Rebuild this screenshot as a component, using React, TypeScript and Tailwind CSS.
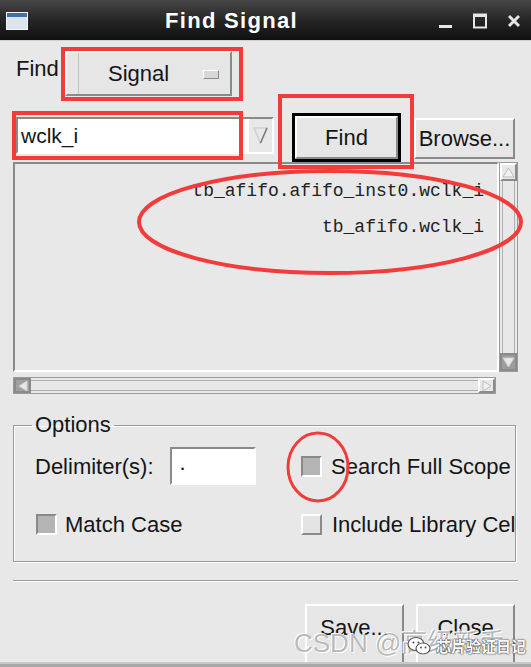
import React from "react";

const raised =
  "border-2 border-t-white border-l-white border-r-[#8a8a8a] border-b-[#8a8a8a]";
const sunken =
  "border-2 border-t-[#8a8a8a] border-l-[#8a8a8a] border-r-white border-b-white";

function WinIcon() {
  return (
    <svg width="22" height="18" viewBox="0 0 22 18">
      <rect x="0.5" y="0.5" width="21" height="17" fill="#dde4ec" stroke="#f4f4f4" />
      <rect x="1" y="1" width="20" height="4" fill="#3f6fae" />
    </svg>
  );
}

function Controls() {
  return (
    <div className="flex items-center gap-[21px] mr-[11px] mt-[2px]">
      <svg width="13" height="16" viewBox="0 0 13 16">
        <rect x="0" y="12" width="13" height="3" fill="#e6e6e6" />
      </svg>
      <svg width="14" height="16" viewBox="0 0 14 16">
        <rect x="1" y="1.5" width="12" height="13" fill="none" stroke="#e6e6e6" strokeWidth="2" />
        <rect x="1" y="1" width="12" height="3" fill="#e6e6e6" />
      </svg>
      <svg width="12" height="16" viewBox="0 0 12 16">
        <path d="M1 3 L11 13 M11 3 L1 13" stroke="#e6e6e6" strokeWidth="3" />
      </svg>
    </div>
  );
}

function Checkbox({ checked }: { checked: boolean }) {
  return checked ? (
    <div className="w-[21px] h-[21px] shrink-0 border-2 border-t-[#8a8a8a] border-l-[#8a8a8a] border-r-white border-b-white bg-[#b4b4b4]" />
  ) : (
    <div className="w-[21px] h-[21px] shrink-0 border-2 border-t-white border-l-white border-r-[#8a8a8a] border-b-[#8a8a8a] bg-[#e4e4e4]" />
  );
}

function VScroll() {
  return (
    <div className="w-[19px] h-[210px] shrink-0 flex flex-col border border-[#9a9a9a] bg-[#e8e8e8]">
      <div className={`h-[18px] ${raised} flex items-center justify-center`}>
        <svg width="13" height="11" viewBox="0 0 13 11">
          <path d="M6.5 1 L12 10 L1 10 Z" fill="#f2f2f2" stroke="#bdbdbd" />
        </svg>
      </div>
      <div className="flex-1 border-x border-[#b0b0b0] mx-[2px]" />
      <div className="h-[18px] border-2 border-[#8a8a8a] bg-[#9c9c9c] flex items-center justify-center">
        <svg width="13" height="11" viewBox="0 0 13 11">
          <path d="M1 1 L12 1 L6.5 10 Z" fill="#e8e8e8" stroke="#cfcfcf" />
        </svg>
      </div>
    </div>
  );
}

function HScroll() {
  return (
    <div className="ml-[13px] mt-[5px] w-[483px] h-[17px] shrink-0 flex border border-[#9a9a9a] bg-[#e8e8e8]">
      <div className="w-[17px] border-2 border-[#8a8a8a] bg-[#a0a0a0] flex items-center justify-center">
        <svg width="10" height="12" viewBox="0 0 10 12">
          <path d="M9 1 L9 11 L1 6 Z" fill="#e8e8e8" stroke="#cfcfcf" />
        </svg>
      </div>
      <div className="flex-1 border-y border-[#b0b0b0] my-[2px]" />
      <div className={`w-[17px] ${raised} flex items-center justify-center`}>
        <svg width="10" height="12" viewBox="0 0 10 12">
          <path d="M1 1 L1 11 L9 6 Z" fill="#f2f2f2" stroke="#bdbdbd" />
        </svg>
      </div>
    </div>
  );
}

export default function App() {
  return (
    <div className="relative w-[531px] h-[667px] overflow-hidden bg-[#e8e8e8] font-['Liberation_Sans',Arial,sans-serif] text-[#151515] flex flex-col">
      {/* Title bar */}
      <div className="h-[41px] shrink-0 flex items-center bg-linear-to-b from-[#474747] via-[#262626] to-[#101010] border-b border-[#cfcfcf]">
        <div className="ml-[6px] mt-[2px] flex">
          <WinIcon />
        </div>
        <div className="flex-1 text-center text-white font-bold text-[22px] tracking-[1.3px] mr-[4px]">
          Find Signal
        </div>
        <Controls />
      </div>

      {/* Row 1 */}
      <div className="mt-[10px] h-[45px] shrink-0 flex items-center">
        <span className="ml-[16px] w-[49px] text-[22px] leading-[22px] -mt-[10px]">Find</span>
        <div className={`w-[167px] h-[45px] ${raised} bg-[#e6e6e6] flex items-center`}>
          <div className="w-[12px] h-full border-r border-[#c4c4c4]" />
          <span className="ml-[29px] text-[22px] leading-[22px] mt-[1px]">Signal</span>
          <div className={`ml-[34px] w-[16px] h-[9px] ${raised} border-[1.5px] bg-[#d8d8d8] mt-[2px]`} />
        </div>
      </div>

      {/* Row 2 */}
      <div className="mt-[17px] h-[49px] shrink-0 flex items-start">
        <div className={`ml-[16px] mt-[4px] w-[258px] h-[37px] ${sunken} flex`}>
          <div className="flex-1 bg-white flex items-center pl-[3px] text-[21px]">wclk_i</div>
          <div className="w-[23px] bg-[#e8e8e8] flex items-center justify-center">
            <svg width="15" height="17" viewBox="0 0 15 17">
              <path d="M1 1 L14 1 L7.5 16 Z" fill="none" stroke="#d0d0d0" strokeWidth="1.5" />
              <path d="M14 1 L7.5 16" stroke="#7a7a7a" strokeWidth="1.5" />
            </svg>
          </div>
        </div>
        <div className="ml-[18px] w-[109px] h-[49px] border-[3px] border-black">
          <div className={`w-full h-full ${raised} bg-[#e6e6e6] flex items-center justify-center text-[22px]`}>
            Find
          </div>
        </div>
        <div className={`ml-[13px] mt-[5px] w-[101px] h-[41px] ${raised} bg-[#e6e6e6] flex items-center justify-center text-[22px]`}>
          Browse...
        </div>
      </div>

      {/* List */}
      <div className="flex shrink-0">
        <div className={`ml-[13px] w-[486px] h-[210px] ${sunken} bg-[#e8e8e8] pt-[9px] pr-[13px] font-['Liberation_Mono',monospace] text-[18px] leading-[36px] text-right text-[#222]`}>
          <div>tb_afifo.afifo_inst0.wclk_i</div>
          <div>tb_afifo.wclk_i</div>
        </div>
        <VScroll />
      </div>
      <HScroll />

      {/* Options */}
      <fieldset className="mt-[20px] ml-[13px] w-[503px] shrink-0 border border-[#9a9a9a] shadow-[inset_1px_1px_0_#fff,1px_1px_0_#fff] pl-[21px] pt-[11px] pb-[18px] whitespace-nowrap">
        <legend className="-ml-[3px] px-[3px] text-[22px] leading-[22px]">Options</legend>
        <div className="grid grid-cols-[266px_1fr] gap-y-[20px] text-[22px] overflow-hidden">
          <div className="flex items-center h-[38px]">
            <span>Delimiter(s):</span>
            <div className={`ml-[16px] w-[86px] h-[38px] ${sunken} bg-white pl-[8px] leading-[28px]`}>.</div>
          </div>
          <div className="flex items-center h-[38px] overflow-hidden">
            <Checkbox checked />
            <span className="ml-[9px]">Search Full Scope</span>
          </div>
          <div className="flex items-center h-[38px]">
            <div className="ml-[1px]">
              <Checkbox checked />
            </div>
            <span className="ml-[8px]">Match Case</span>
          </div>
          <div className="flex items-center h-[38px] overflow-hidden">
            <Checkbox checked={false} />
            <span className="ml-[10px]">Include Library Cells</span>
          </div>
        </div>
      </fieldset>

      {/* Separator */}
      <div className="mt-[18px] ml-[13px] w-[505px] h-[2px] shrink-0 border-t border-[#9a9a9a] border-b border-b-white" />

      {/* Buttons */}
      <div className="mt-[22px] flex-1 flex">
        <div className="ml-[305px] w-[99px] h-full border-2 border-b-0 border-t-white border-l-white border-r-[#8a8a8a] bg-[#e6e6e6] text-center text-[22px] pt-[5px]">
          Save...
        </div>
        <div className="ml-[12px] w-[99px] h-full border-2 border-b-0 border-t-white border-l-white border-r-[#8a8a8a] bg-[#e6e6e6] text-center text-[22px] pt-[5px]">
          Close
        </div>
      </div>
      <div className="h-[5px] shrink-0 bg-[#a8a8a8] border-t-2 border-[#c8c8c8]" />

      {/* Red annotations */}
      <div className="absolute left-[61px] top-[47px] w-[182px] h-[54px] border-4 border-[#f23b3b]" />
      <div className="absolute left-[12px] top-[111px] w-[231px] h-[49px] border-4 border-[#f23b3b]" />
      <div className="absolute left-[278px] top-[94px] w-[136px] h-[75px] border-4 border-[#f23b3b]" />
      <svg className="absolute left-0 top-0 pointer-events-none" width="531" height="667" viewBox="0 0 531 667">
        <ellipse cx="330" cy="222" rx="191" ry="51" fill="none" stroke="#f23b3b" strokeWidth="4" />
        <ellipse cx="318" cy="467" rx="30" ry="34" fill="none" stroke="#f23b3b" strokeWidth="3" />
      </svg>

      {/* Watermark */}
      <div className="absolute left-[294px] top-[624px] text-[26px] text-[#8c8c8c]/60 font-['Liberation_Sans','Noto_Sans_CJK_SC',sans-serif] [text-shadow:1px_1px_0_#fff,-1px_-1px_0_#fff] whitespace-nowrap">
        CSDN @高级新手
      </div>
      <div className="absolute left-[407px] top-[635px] flex items-center gap-[4px]">
        <svg width="25" height="20" viewBox="0 0 25 20">
          <ellipse cx="9" cy="8" rx="8" ry="6.5" fill="#fff" stroke="#555" strokeWidth="1.2" />
          <ellipse cx="16" cy="12.5" rx="7" ry="5.5" fill="#fff" stroke="#555" strokeWidth="1.2" />
          <circle cx="6.5" cy="6.5" r="1" fill="#444" />
          <circle cx="11.5" cy="6.5" r="1" fill="#444" />
          <circle cx="14" cy="11.5" r="0.9" fill="#444" />
          <circle cx="18.5" cy="11.5" r="0.9" fill="#444" />
        </svg>
        <span className="text-[15px] font-bold text-white font-['Noto_Sans_CJK_SC',sans-serif] [text-shadow:0_0_2px_#222,0_0_1px_#222]">
          芯片验证日记
        </span>
      </div>
    </div>
  );
}
